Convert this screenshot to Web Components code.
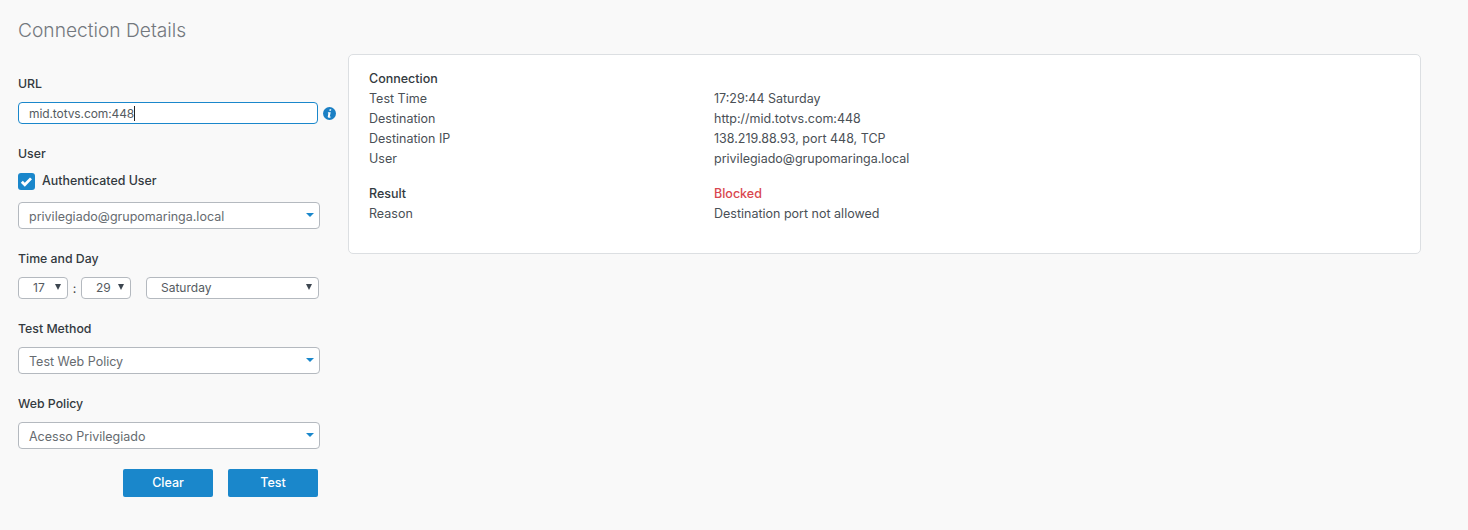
<!DOCTYPE html>
<html><head><meta charset="utf-8"><style>
html,body{margin:0;padding:0;height:530px;overflow:hidden;background:#f9f9f9;}
body{font-family:"Inter","Liberation Sans",sans-serif;font-size:12.5px;color:#444;}
</style></head><body>
<x-page>
  <x-title slot="title">Connection Details</x-title>
  <x-form slot="form">
    <x-label>URL</x-label>
    <x-row style="height:22px;margin-bottom:21px"><x-input>mid.totvs.com:448</x-input><x-info></x-info></x-row>
    <x-label style="height:28px">User</x-label>
    <x-check style="margin-bottom:12px">Authenticated User</x-check>
    <x-select style="margin-bottom:21px">privilegiado@grupomaringa.local</x-select>
    <x-label>Time and Day</x-label>
    <x-row style="margin-bottom:21px;height:22px">
      <x-mini style="width:50px;--pl:14px">17</x-mini><span style="width:13px;text-align:center;color:#444">:</span><x-mini style="width:50px;--pl:14px">29</x-mini><span style="width:15px"></span><x-mini style="width:173px;--pl:14px">Saturday</x-mini>
    </x-row>
    <x-label>Test Method</x-label>
    <x-select style="margin-bottom:21px">Test Web Policy</x-select>
    <x-label>Web Policy</x-label>
    <x-select style="margin-bottom:20px">Acesso Privilegiado</x-select>
    <x-row style="justify-content:flex-end;gap:15px;width:300px"><x-btn>Clear</x-btn><x-btn>Test</x-btn></x-row>
  </x-form>
  <x-card slot="card">
    <x-kv head>Connection</x-kv>
    <x-kv k="Test Time">17:29:44 Saturday</x-kv>
    <x-kv k="Destination">http://mid.totvs.com:448</x-kv>
    <x-kv k="Destination IP">138.219.88.93, port 448, TCP</x-kv>
    <x-kv k="User">privilegiado@grupomaringa.local</x-kv>
    <div style="height:15px"></div>
    <x-kv head k="Result" red>Blocked</x-kv>
    <x-kv k="Reason">Destination port not allowed</x-kv>
  </x-card>
</x-page>
<script>
function def(name,css,html){
  customElements.define(name,class extends HTMLElement{
    constructor(){super();const s=this.attachShadow({mode:'open'});
      s.innerHTML='<style>'+css+'</style>'+(typeof html==='function'?html(this):html);}
  });
}
def('x-page',':host{display:grid;grid-template-columns:330px 1073px;grid-template-rows:36px 1fr;padding:18px 0 0 18px;box-sizing:border-box;height:530px}'+
 '.t{grid-column:1/3}',
 '<div class="t"><slot name="title"></slot></div><div><slot name="form"></slot></div><div><slot name="card"></slot></div>');
def('x-title',':host{display:block;font-size:19.2px;font-weight:300;color:#73787e;line-height:22px;padding-top:1px}','<slot></slot>');
def('x-form',':host{display:block;padding-top:21px;width:330px}','<slot></slot>');
def('x-label',':host{display:block;box-sizing:border-box;height:27px;font-size:12.3px;font-weight:500;color:#333a40;line-height:16px;padding-top:1px}','<slot></slot>');
def('x-row',':host{display:flex;align-items:center}','<slot></slot>');
def('x-input',':host{display:flex;align-items:center;box-sizing:border-box;width:300px;height:22px;background:#fff;border:1px solid #1a87cb;border-radius:4px;padding-left:10px;color:#555b61;font-size:12px;letter-spacing:-.1px}.c{width:1px;height:15px;background:#222}','<slot></slot><span class="c"></span>');
def('x-info',':host{display:block;width:13px;height:13px;margin-left:5px}svg{display:block}','<svg width="13" height="13" viewBox="0 0 13 13"><circle cx="6.5" cy="6.5" r="6.5" fill="#1a7fc4"/><path d="M6.600 2.200h1.700l-.3 1.600H6.300zM5 5.200h2.700l-.9 4.200c-.1.4.2.4.9.2l-.1.8c-.6.3-1.200.4-1.800.4-.8 0-1.200-.5-1-1.200l.6-3.400H4.800z" fill="#fff"/></svg>');
def('x-check',':host{display:flex;align-items:center;height:17px;font-weight:500;font-size:12.4px;color:#333a40;gap:7px}svg{display:block;flex:none}span{position:relative;top:-1px}','<svg width="17" height="17" viewBox="0 0 17 17"><rect width="17" height="17" rx="3" fill="#1a87cb"/><path d="M3.800 8.800l3 3 6.200-6.400" fill="none" stroke="#fff" stroke-width="2.800"/></svg><span><slot></slot></span>');
def('x-select',':host{display:flex;align-items:center;box-sizing:border-box;width:302px;height:27px;background:#fff;border:1px solid #b4b9bf;border-radius:4px;padding:2px 0 0 10px;color:#666b70;position:relative}i{position:absolute;right:5px;top:10px;width:0;height:0;border:4px solid transparent;border-top:4px solid #1a87cb;border-bottom:0}','<slot></slot><i></i>');
def('x-mini',':host{display:flex;align-items:center;box-sizing:border-box;height:22px;background:#fff;border:1px solid #b4b9bf;border-radius:4px;padding:0 0 2px var(--pl);color:#555b61;position:relative;font-size:12px}i{position:absolute;right:6px;top:6px;width:0;height:0;border:3px solid transparent;border-top:6px solid #3d4650;border-bottom:0}','<slot></slot><i></i>');
def('x-btn',':host{display:flex;align-items:center;justify-content:center;width:90px;height:28px;box-sizing:border-box;padding-bottom:2px;background:#1a87cb;border-radius:2px;color:#fff;font-weight:500}','<slot></slot>');
def('x-card',':host{display:block;box-sizing:border-box;height:200px;background:#fff;border:1px solid #dcdfe2;border-radius:5px;padding:14px 20px}','<slot></slot>');
def('x-kv',':host{display:grid;grid-template-columns:345px 1fr;line-height:20px;height:20px;color:#4a5056}.h{font-weight:500;color:#333a40}:host([head]) .v{font-weight:500}:host([red]) .v{color:#d9474f}',
 e=>'<span class="k'+(e.hasAttribute('head')?' h':'')+'">'+(e.getAttribute('k')||'')+'</span><span class="v"><slot></slot></span>');
document.querySelectorAll('x-kv[head]:not([k])').forEach(e=>{e.shadowRoot.querySelector('.k').textContent=e.textContent;e.shadowRoot.querySelector('.v').style.display='none';});
</script>
</body></html>
